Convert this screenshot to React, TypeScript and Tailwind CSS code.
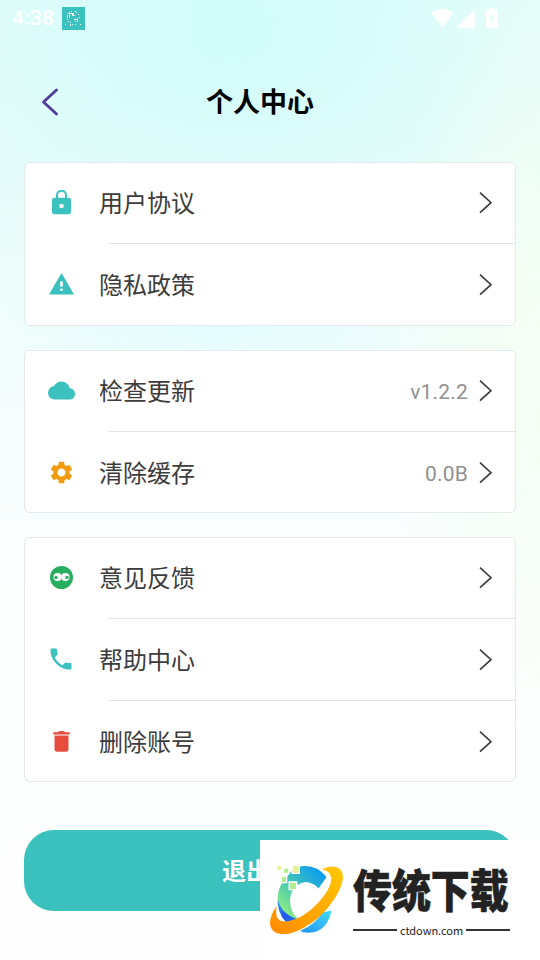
import type { ReactNode } from "react";
import { MdCloud, MdSettings } from "react-icons/md";
import { IoMdCall } from "react-icons/io";

const cjk = "font-['Roboto','Noto_Sans_CJK_SC',sans-serif]";

function Chevron() {
  return (
    <svg width="14" height="22" viewBox="0 0 14 22" fill="none" stroke="#3a3a3a" strokeWidth="1.6" className="shrink-0">
      <path d="M1 0.7 L12 10.7 L1 20.7" />
    </svg>
  );
}

function LockIcon() {
  return (
    <svg width="19" height="25" viewBox="0 0 19 25">
      <path d="M5 9V5.2a4.5 4.5 0 0 1 9 0V9" fill="none" stroke="#3bc1be" strokeWidth="2" />
      <rect y="7.7" width="19" height="16.6" rx="2.4" fill="#3bc1be" />
      <circle cx="9.5" cy="16" r="2.3" fill="#fff" />
    </svg>
  );
}

function WarningIcon() {
  return (
    <svg width="25" height="22" viewBox="0 0 25 22">
      <path d="M12.5 0L25 21.5H0z" fill="#3bc1be" />
      <rect x="11.2" y="8.3" width="2.6" height="5.4" rx="0.9" fill="#fff" />
      <rect x="11.2" y="15.4" width="2.6" height="2.6" rx="0.9" fill="#fff" />
    </svg>
  );
}

function TrashIcon() {
  return (
    <svg width="17" height="21" viewBox="0 0 17 21" fill="#e74c3c">
      <path d="M0.3 1.3H4.6Q5.6 0 8.5 0T12.4 1.3H16.7V3.4H0.3z" />
      <path d="M1.5 4.6H15.5V18Q15.5 20.7 12.8 20.7H4.2Q1.5 20.7 1.5 18z" />
    </svg>
  );
}

function EyesIcon() {
  return (
    <svg width="23" height="23" viewBox="0 0 23 23">
      <circle cx="11.5" cy="11.5" r="11.5" fill="#27ae60" />
      <circle cx="7.6" cy="11" r="4.1" fill="#fff" />
      <circle cx="15.4" cy="11" r="4.1" fill="#fff" />
      <circle cx="6" cy="11.4" r="1.7" fill="#27ae60" />
      <circle cx="17" cy="11.4" r="1.7" fill="#27ae60" />
    </svg>
  );
}

type RowProps = { icon: ReactNode; label: string; value?: string; last?: boolean; height: string };

function Row({ icon, label, value, last, height }: RowProps) {
  return (
    <div className={`flex shrink-0 flex-col ${height}`}>
      <div className="flex flex-1 items-center pr-[22px] pl-[22px]">
        <div className="mb-0.5 flex w-7 shrink-0 items-center justify-center">{icon}</div>
        <span className="mt-0.5 ml-6 flex-1 text-2xl text-[#3c3c3c]">{label}</span>
        {value && <span className="mt-[3px] mr-[11px] text-[21px] tracking-[0.2px] text-[#909090]">{value}</span>}
        <Chevron />
      </div>
      {!last && <div className="ml-[83px] h-px bg-[#e3e6e6]" />}
    </div>
  );
}

function Card({ children, className }: { children: ReactNode; className: string }) {
  return <section className={`flex flex-col rounded-md border border-[#e3e8e8] bg-white ${className}`}>{children}</section>;
}

function StatusBar() {
  return (
    <div className="flex h-[37px] items-center px-3 text-white">
      <span className="mt-px text-[21px] font-medium tracking-[0.3px]">4:38</span>
      <svg width="23" height="23" viewBox="0 0 23 23" className="ml-[7px]" shapeRendering="crispEdges">
        <rect width="23" height="23" fill="#3bc1be" />
        <path
          fill="#fff"
          d="M6 6h4v1H6zM7 5h1v6H7zM10 6h2v3h-2zM9 4h1v1H9zM13 4h1v1h-1zM12 8h1v1h-1zM16 7h1v1h-1zM5 8h1v3H5zM12 12h4v1h-4zM15 11h1v4h-1zM17 10h1v1h-1zM5 12h1v1H5zM6 14h1v1H6zM8 15h1v1H8zM13 14h1v1h-1zM3 17h1v1H3zM8 17h1v2H8zM10 17h1v1h-1zM13 17h1v1h-1zM18 17h1v1h-1zM14 5h1v1h-1z"
        />
      </svg>
      <svg width="68" height="21" viewBox="0 0 68 21" fill="#fff" className="mr-[29px] ml-auto">
        <path d="M0.5 5Q11.5-3 22.5 5L11.5 20z" />
        <path d="M44 1V20H25z" />
        <path
          fillRule="evenodd"
          d="M56 1.5h3V0h4v1.5h3q1 0 1 1V19q0 1-1 1H56q-1 0-1-1V2.5q0-1 1-1zM61.5 5.5l-3.2 6h2v5l3.4-6.5h-2.2z"
        />
      </svg>
    </div>
  );
}

function SiteBadge() {
  return (
    <div className="absolute top-[840px] left-[260px] flex h-[120px] w-[280px] bg-white pt-[24px] pl-[9px]">
      <svg width="76" height="72" viewBox="0 0 76 72" className="shrink-0">
        <defs>
          <linearGradient id="arc" gradientUnits="userSpaceOnUse" x1="16" y1="48" x2="55" y2="8">
            <stop offset="0" stopColor="#8bea85" />
            <stop offset=".4" stopColor="#48c9b0" />
            <stop offset="1" stopColor="#0799f5" />
          </linearGradient>
          <linearGradient id="ring" x1="0" y1="1" x2="1" y2="0">
            <stop offset="0" stopColor="#ff8a00" />
            <stop offset="1" stopColor="#ffc800" />
          </linearGradient>
          <linearGradient id="blue" x1="0" y1="0" x2="1" y2="1">
            <stop offset="0" stopColor="#39b6f5" />
            <stop offset=".55" stopColor="#2055e8" />
            <stop offset="1" stopColor="#2386ee" />
          </linearGradient>
          <linearGradient id="tail" x1="0" y1="1" x2="1" y2="0">
            <stop offset="0" stopColor="#2492ed" />
            <stop offset="1" stopColor="#43dcff" />
          </linearGradient>
        </defs>
        <path d="M8.8 31Q7 48 17 58L30 55.5Q14 50 8.8 31z" fill="url(#blue)" />
        <path d="M36 2Q49 2 57.5 13L49.5 24.5Q44 18 36 18Q22 21 21 36Q21 48 29.5 55.5Q11 50 8.8 34Q9 24 14 18L24 5Q29 2 36 2z" fill="url(#arc)" />
        <path d="M62.5 46.5L53 48.5Q47 60 31 67Q36 70 46 68Q59 64 62.5 46.5z" fill="url(#tail)" />
        <path
          d="M52.5 5.5Q61 1.5 67 3Q74 5 74 14Q73 26 59.5 43Q49 56 36 63Q23 71 12 70Q2 69 1 60Q1 51 7.7 42Q6.5 49 8 53Q10 58 18 57.5Q34 55 49 39Q62 25 62.5 14Q61 6 52.5 5.5z"
          fill="url(#ring)"
        />
        <path d="M22.5 1H31v9h-8.5zM11.7 11.7h6.6v7.6h-6.6zM19.5 17.3h9v9h-9zM13.8 3.5h6.7v6.7h-6.7z" fill="#fff" />
        <path d="M23.7 2h6v6.7h-6zM8.7 2h3.6v4H8.7z" fill="#e3f293" />
        <path d="M15 4.7h4.3v4H15zM13 13h4v5h-4zM21 18.7h6V25h-6z" fill="#b4ec91" />
      </svg>
      <div className="ml-2 flex w-[157px] flex-col">
        <div className="h-[56px] whitespace-nowrap">
          <span className="inline-block origin-left scale-x-[0.865] text-[45px] leading-[57px] font-black text-[#222] [-webkit-text-stroke:0.6px_#222]">
            传统下载
          </span>
        </div>
        <div className="mt-[3px] flex h-[14px] items-center gap-[3px]">
          <span className="h-0.5 w-[45px] bg-[#333]" />
          <span className="flex-1 text-center font-['Noto_Sans_CJK_SC',sans-serif] text-[11px] leading-[14px] tracking-[-0.05px] text-[#222]">
            ctdown.com
          </span>
          <span className="h-0.5 w-[45px] bg-[#333]" />
        </div>
      </div>
    </div>
  );
}

export default function App() {
  return (
    <main
      className={`relative h-[960px] w-[540px] overflow-hidden bg-[#fdfefe] bg-[radial-gradient(ellipse_300px_230px_at_230px_30px,#cbfcfacc,#cbfcfa00),radial-gradient(ellipse_150px_420px_at_540px_350px,#f5fff3,#f5fff300),radial-gradient(ellipse_220px_140px_at_220px_320px,#dcfbff99,#dcfbff00),linear-gradient(180deg,#e2fcfa_0px,#e6fcfa_180px,#f2fdfc_350px,#fcfefe_600px,#fefefe_960px)] ${cjk}`}
    >
      <StatusBar />
      <header className="flex h-[125px] items-center px-10">
        <svg width="20" height="28" viewBox="0 0 20 28" fill="none" stroke="#4f3a9c" strokeWidth="2.8" strokeLinecap="round" strokeLinejoin="round" className="mt-1">
          <path d="M16.5 2L3.5 14L16.5 26" />
        </svg>
        <h1 className="mt-1.5 ml-[146px] text-[27px] leading-9 font-bold text-black">个人中心</h1>
      </header>
      <div className="flex flex-col gap-6 px-6">
        <Card className="h-[164px]">
          <Row height="h-[81px]" icon={<LockIcon />} label="用户协议" />
          <Row height="h-[82px]" icon={<WarningIcon />} label="隐私政策" last />
        </Card>
        <Card className="h-[163px]">
          <Row height="h-[81px]" icon={<MdCloud size={27} color="#3bc1be" />} label="检查更新" value="v1.2.2" />
          <Row height="h-[82px]" icon={<MdSettings size={27} color="#f39c12" />} label="清除缓存" value="0.0B" last />
        </Card>
        <Card className="h-[245px]">
          <Row height="h-[81px]" icon={<EyesIcon />} label="意见反馈" />
          <Row height="h-[82px]" icon={<IoMdCall size={28} color="#3bc1be" />} label="帮助中心" />
          <Row height="h-[82px]" icon={<TrashIcon />} label="删除账号" last />
        </Card>
        <button className="mt-6 h-[81px] rounded-[30px] bg-[#3bc1be] pt-0.5 text-2xl font-bold text-white">退出登录</button>
      </div>
      <SiteBadge />
    </main>
  );
}
